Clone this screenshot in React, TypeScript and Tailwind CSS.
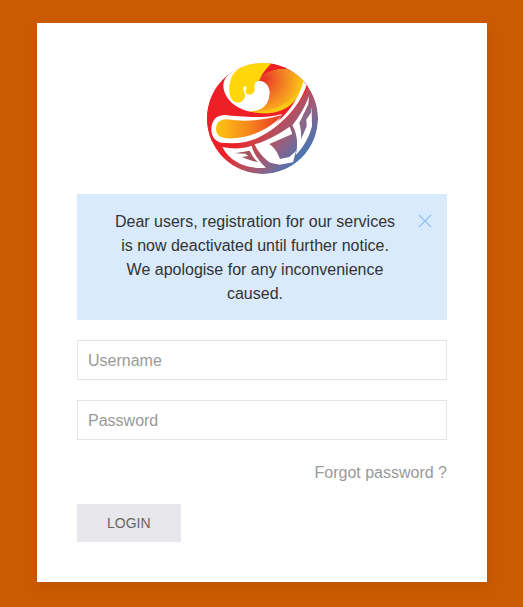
import { useState } from "react";

function Logo() {
  return (
    <svg viewBox="21 21 333 333" className="size-[111px]" role="img" aria-label="GCC">
      <defs>
        <linearGradient id="disc" gradientUnits="userSpaceOnUse" x1="150" y1="205" x2="290" y2="325">
          <stop offset="0" stopColor="#ed2027" />
          <stop offset="0.25" stopColor="#cf4048" />
          <stop offset="0.6" stopColor="#96607f" />
          <stop offset="1" stopColor="#4676b7" />
        </linearGradient>
        <radialGradient id="crest" gradientUnits="userSpaceOnUse" cx="190" cy="70" r="125">
          <stop offset="0" stopColor="#e9302a" />
          <stop offset="0.35" stopColor="#ef6c25" />
          <stop offset="0.7" stopColor="#f6a01e" />
          <stop offset="1" stopColor="#fcd10e" />
        </radialGradient>
        <linearGradient id="drop" x1="0" x2="1">
          <stop offset="0" stopColor="#fcc60f" />
          <stop offset="0.5" stopColor="#f5871f" />
          <stop offset="1" stopColor="#ea3325" />
        </linearGradient>
        <clipPath id="round">
          <circle cx="187.500" cy="187.500" r="166.500" />
        </clipPath>
      </defs>
      <g clipPath="url(#round)">
        <circle cx="187.500" cy="187.500" r="166.500" fill="url(#disc)" />
        <path d="M190 10H330V80C300 150 250 205 190 235L60 255L20 260V60L90 50L150 100Z" fill="#ed2027" />
        <path d="M20 20H217L185 60C204 70 212 85 210 108C208 145 190 166 155 168C105 160 70 125 70 88C70 75 77 63 86 54L40 80Z" fill="#fff" />
        <path d="M195 52C225 36 255 34 282 44L330 50L311 80C306 104 291 130 268 149C235 172 195 178 148 166C190 166 212 140 209 107C206 83 190 70 165 75C175 65 185 57 195 52Z" fill="url(#crest)" />
        <path d="M217 20C202 27 190 42 178 70C187 54 205 46 228 40C252 34 272 40 286 48L270 20Z" fill="#ed2027" />
        <path d="M148 165C190 170 225 160 262 138C282 125 299 107 309 88C302 114 289 134 268 149C240 171 190 178 148 165Z" fill="#fbc513" />
        <path d="M219 18C200 35 188 50 178 73C165 76 162 86 164 96C165 109 158 116 148 116C138 116 133 107 139 99C140 91 136 86 131 93C127 101 137 112 135 122C131 139 111 145 99 134C86 122 83 87 97 59C116 28 155 15 219 18Z" fill="#fed60a" />
        <path d="M34 222C34 196 47 178 73 177C119 181 190 190 246 174C236 203 190 236 160 247L80 261C52 263 35 248 34 222Z" fill="#fff" />
        <path d="M48 220C48 200 60 189 82 190C128 197 178 196 246 177C222 208 177 233 130 243C91 250 48 252 48 220Z" fill="url(#drop)" />
        <path d="M311 76L320 87C298 154 241 213 173 246C135 262 96 266 60 258L75 249C113 252 149 244 184 229C242 199 289 150 311 76Z" fill="#fff" />
        <path d="M67 273C99 280 132 278 155 269C161 294 178 318 198 335C141 341 90 318 67 273Z" fill="#fff" />
        <path d="M104 292L149 284C156 299 164 310 174 318C158 316 143 310 126 303L145 300L136 293Z" fill="#a65360" />
        <path d="M164 265C200 254 237 235 269 212L277 234L208 264C224 275 233 290 240 309L268 303L288 285L279 319L238 326C226 324 216 322 208 319C189 304 173 287 164 265Z" fill="#fff" />
        <path d="M277 208C298 181 317 150 327 119L325 145L298 201C303 217 304 233 303 250L320 211L318 176L335 155L336 210C328 243 310 275 287 297C295 265 292 234 277 208Z" fill="#fff" />
        <path d="M299 201L321 161L335 153L333 170L313 199L303 230C303 219 302 210 299 201Z" fill="#8b6887" />
      </g>
    </svg>
  );
}

export default function App() {
  const [alertOpen, setAlertOpen] = useState(true);
  return (
    <main className="min-h-screen bg-[#cc5a02] pt-[23px] pr-9 pb-[25px] pl-[37px] font-['Liberation_Sans',Arial,sans-serif] text-base">
      <section className="mx-auto w-full max-w-[450px] bg-white p-10 shadow-[0_5px_15px_rgba(0,0,0,0.08)]">
        <div className="mb-5 flex justify-center">
          <Logo />
        </div>
        {alertOpen && (
          <div className="relative mb-5 bg-[#d8eafc] pt-4 pr-[29px] pb-[14px] pl-[15px] text-center leading-6 text-[#333]">
            <p className="px-5">
              Dear users, registration for our services is now deactivated until further notice. We apologise for any
              inconvenience caused.
            </p>
            <button
              type="button"
              aria-label="Close"
              onClick={() => setAlertOpen(false)}
              className="absolute top-5 right-[15px] text-[#8bc1fb]"
            >
              <svg width="14" height="14" viewBox="0 0 14 14" fill="none" stroke="currentColor" strokeWidth="1.1">
                <path d="M1 1l12 12M13 1L1 13" />
              </svg>
            </button>
          </div>
        )}
        <form onSubmit={(e) => e.preventDefault()}>
          <input
            type="text"
            aria-label="Username"
            placeholder="Username"
            className="mb-5 block h-10 w-full border border-[#e5e5e5] bg-white px-[10px] pt-[2px] text-[#666] placeholder:text-[#999]"
          />
          <input
            type="password"
            aria-label="Password"
            placeholder="Password"
            className="mb-5 block h-10 w-full border border-[#e5e5e5] bg-white px-[10px] pt-[2px] text-[#666] placeholder:text-[#999]"
          />
          <div className="pt-px pb-[19px] text-right leading-6">
            <a href="#forgot" className="text-[#999]">
              Forgot password ?
            </a>
          </div>
          <button type="submit" className="block bg-[#e8e7ec] px-[30px] text-sm leading-[38px] text-[#666] uppercase">
            Login
          </button>
        </form>
      </section>
    </main>
  );
}
